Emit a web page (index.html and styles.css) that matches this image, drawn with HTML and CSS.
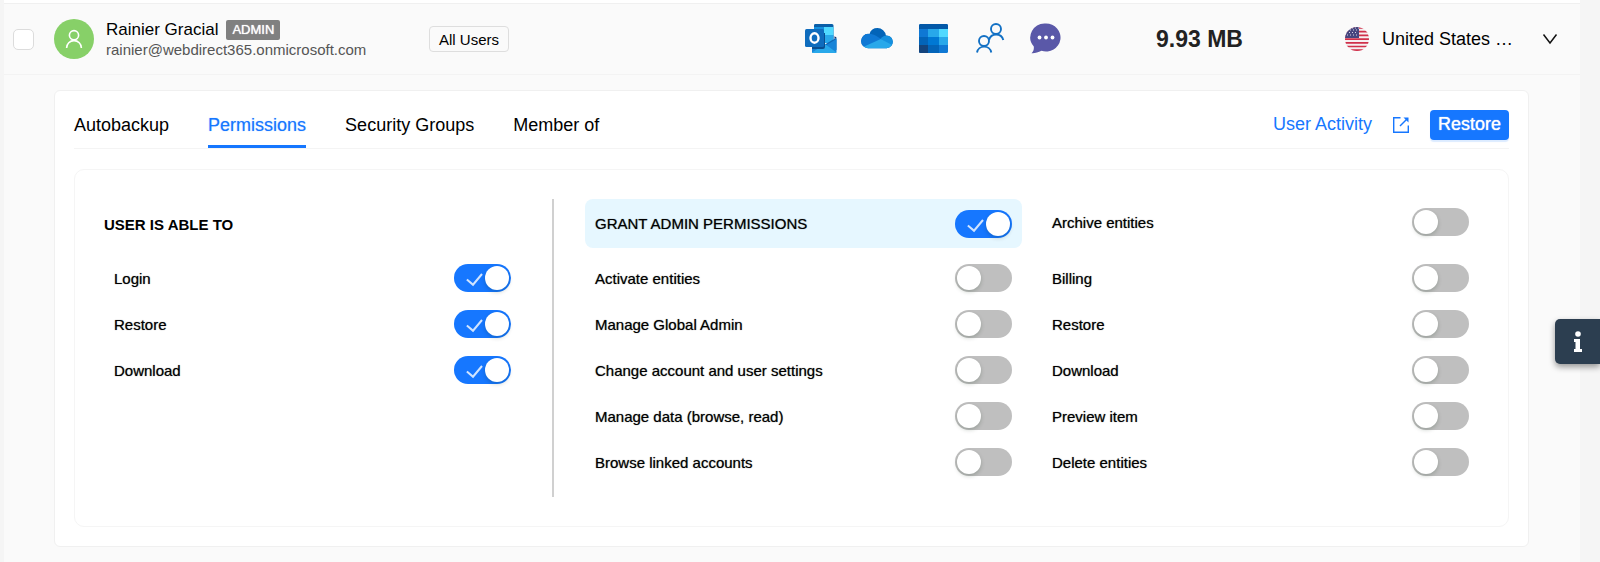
FILE: index.html
```html
<!DOCTYPE html>
<html lang="en">
<head>
    <meta charset="UTF-8" />
    <title>User permissions</title>
    <meta name="viewport" content="width=device-width, initial-scale=1.0" />
    <link rel="stylesheet" href="styles.css">
</head>
<body>

    <main class="page">
        <header class="user-row">
            <input type="checkbox" class="row-check" aria-label="Select Rainier Gracial" />

            <div class="user">
                <span class="avatar">
                    <svg width="20" height="20" viewBox="0 0 20 20" fill="none" stroke="#fff" stroke-width="1.6">
                        <circle cx="10" cy="6.2" r="4.6" />
                        <path d="M2.6 19a7.4 7.4 0 0 1 14.8 0" />
                    </svg>
                </span>
                <div class="user-text">
                    <div class="user-name">Rainier Gracial <span class="badge">ADMIN</span></div>
                    <div class="user-email">rainier@webdirect365.onmicrosoft.com</div>
                </div>
            </div>

            <div><button type="button" class="tag">All Users</button></div>

            <div class="services">
                <!-- Outlook -->
                <svg width="32" height="32" viewBox="0 0 32 32">
                    <path d="M10 1h17a1.5 1.5 0 0 1 1.5 1.5V16H9V2.5A1.5 1.5 0 0 1 10 1z" fill="#0a5fa8" />
                    <path d="M9 4h10v7H9z" fill="#1490df" />
                    <path d="M19 4h9.500v8H19z" fill="#50d9ff" />
                    <path d="M9 11h10v8H9z" fill="#0f78d4" />
                    <path d="M19 12h9.500v8H19z" fill="#28a8ea" />
                    <path d="M31.500 14.500L19 22l12.500 5z" fill="#1066b5" />
                    <path d="M31.500 14.500l-2-1.200v2.500z" fill="#0a2767" />
                    <path d="M7 18l12 5.500L31.500 16v13a1 1 0 0 1-1 1H8a1 1 0 0 1-1-1z" fill="#1784d8" />
                    <path d="M7 29.500L20 21l11.500 8.500-1 .5H8z" fill="#28a8ea" />
                    <path d="M7 10h13v14a2 2 0 0 1-2 2H7z" fill="#0a4f8f" />
                    <rect x="0" y="6" width="19" height="18" rx="1.500" fill="#0f6cbd" />
                    <ellipse cx="9.500" cy="15" rx="4" ry="4.700" fill="none" stroke="#fff" stroke-width="2.400" />
                </svg>
                <!-- OneDrive -->
                <svg width="32" height="32" viewBox="0 0 32 32">
                    <defs>
                        <clipPath id="cloud">
                            <circle cx="16.500" cy="13.500" r="8.500" />
                            <circle cx="7.300" cy="18" r="7.200" />
                            <circle cx="25.500" cy="18.800" r="6.300" />
                            <rect x="7" y="14" width="19" height="11.200" />
                        </clipPath>
                    </defs>
                    <g clip-path="url(#cloud)">
                        <rect width="32" height="32" fill="#0364b8" />
                        <path d="M0 8l8 3c3 0 5 .5 7 1.800l6 3.700L0 26z" fill="#0f78d4" />
                        <path d="M19.500 16c1.500-2 3.500-3.500 6-3.500H32V24z" fill="#1490df" />
                        <path d="M1 24.500L19.800 16 32 22.500V32H0z" fill="#28a8ea" />
                    </g>
                </svg>
                <!-- Calendar -->
                <svg width="32" height="32" viewBox="-1 0 32 32">
                    <rect x="1" y="1" width="29" height="29" rx="1.500" fill="#0f78d4" />
                    <path d="M1 6V2.500A1.500 1.500 0 0 1 2.500 1h26A1.500 1.500 0 0 1 30 2.500V6z" fill="#0358a7" />
                    <path d="M10 6h11v8H10z" fill="#28a8ea" />
                    <path d="M21 6h9v8h-9z" fill="#50d9ff" />
                    <path d="M10 14h11v8H10z" fill="#0078d4" />
                    <path d="M21 14h9v8h-9z" fill="#28a8ea" />
                    <path d="M1 14h9v8H1z" fill="#0364b8" />
                    <path d="M1 22h9v8H2.500A1.500 1.500 0 0 1 1 28.500z" fill="#14447d" />
                    <path d="M10 22h11v8H10z" fill="#0364b8" />
                </svg>
                <!-- Contacts -->
                <svg width="32" height="32" viewBox="-1 0 32 32" fill="none" stroke="#1270c4" stroke-width="1.900">
                    <circle cx="22" cy="6" r="5" />
                    <path d="M15 17a7.400 7.400 0 0 1 14.300 0" />
                    <circle cx="10" cy="18" r="5" fill="#fafafa" />
                    <path d="M3 29.500a7.300 7.300 0 0 1 14.300 0" />
                </svg>
                <!-- Chat -->
                <svg width="32" height="32" viewBox="-1 0 32 32">
                    <path d="M16 .5a14.500 14 0 1 1-4.500 27.300C8 29.500 4.500 30.500 1.500 30.200c2-2 2.600-4 2.300-6.700A14.500 14 0 0 1 16 .5z" fill="#5a58a8" />
                    <circle cx="9.500" cy="14.500" r="1.900" fill="#fff" />
                    <circle cx="16" cy="14.500" r="1.900" fill="#fff" />
                    <circle cx="22.500" cy="14.500" r="1.900" fill="#fff" />
                </svg>
            </div>

            <div class="size">9.93 MB</div>

            <div class="region">
                <svg width="24" height="24" viewBox="0 0 24 24">
                    <defs>
                        <clipPath id="round"><circle cx="12" cy="12" r="12" /></clipPath>
                    </defs>
                    <g clip-path="url(#round)">
                        <rect width="24" height="24" fill="#f6eff1" />
                        <path d="M0 1h24M0 4.700h24M0 8.400h24M0 12.100h24M0 15.800h24M0 19.500h24M0 23.200h24" stroke="#d0304a" stroke-width="1.700" />
                        <rect width="14" height="11" fill="#46467f" />
                        <path d="M2 3h12M1 5.500h12M2 8h12M7 1h7" stroke="#d5d5e4" stroke-width="1" stroke-dasharray="1 2" />
                    </g>
                </svg>
                <span class="region-name">United States …</span>
                <button type="button" class="expand" aria-label="Toggle details">
                    <svg width="16" height="12" viewBox="0 0 16 12" fill="none" stroke="#111" stroke-width="1.500">
                        <path d="M1.500 1.500L8 10l6.500-8.500" />
                    </svg>
                </button>
            </div>
        </header>

        <section class="card">
            <div class="card-head">
                <nav class="tabs">
                    <a href="#" class="tab">Autobackup</a>
                    <a href="#" class="tab active">Permissions</a>
                    <a href="#" class="tab">Security Groups</a>
                    <a href="#" class="tab">Member of</a>
                </nav>
                <div class="actions">
                    <a href="#" class="activity">
                        User Activity
                        <svg width="18" height="18" viewBox="0 0 18 18" fill="none" stroke="#1677ff" stroke-width="1.400">
                            <path d="M8.500 1.700H1.700v14.600h14.600V9.500" />
                            <path d="M8 10l7.500-7.500" />
                            <path d="M11.500 1.500h5v5z" fill="#1677ff" stroke="none" />
                        </svg>
                    </a>
                    <button type="button" class="restore">Restore</button>
                </div>
            </div>

            <div class="panel">
                <div class="abilities">
                    <h2>USER IS ABLE TO</h2>
                    <label class="perm">Login <input type="checkbox" class="switch" checked /></label>
                    <label class="perm">Restore <input type="checkbox" class="switch" checked /></label>
                    <label class="perm">Download <input type="checkbox" class="switch" checked /></label>
                </div>

                <div class="column">
                    <label class="perm grant">GRANT ADMIN PERMISSIONS <input type="checkbox" class="switch" checked /></label>
                    <label class="perm">Activate entities <input type="checkbox" class="switch" /></label>
                    <label class="perm">Manage Global Admin <input type="checkbox" class="switch" /></label>
                    <label class="perm">Change account and user settings <input type="checkbox" class="switch" /></label>
                    <label class="perm">Manage data (browse, read) <input type="checkbox" class="switch" /></label>
                    <label class="perm">Browse linked accounts <input type="checkbox" class="switch" /></label>
                </div>

                <div class="column">
                    <label class="perm first">Archive entities <input type="checkbox" class="switch" /></label>
                    <label class="perm">Billing <input type="checkbox" class="switch" /></label>
                    <label class="perm">Restore <input type="checkbox" class="switch" /></label>
                    <label class="perm">Download <input type="checkbox" class="switch" /></label>
                    <label class="perm">Preview item <input type="checkbox" class="switch" /></label>
                    <label class="perm">Delete entities <input type="checkbox" class="switch" /></label>
                </div>
            </div>
        </section>
    </main>

    <button type="button" class="info" aria-label="Information">
        <svg width="10" height="22" viewBox="0 0 10 22" fill="#fff">
            <circle cx="5" cy="3" r="2.800" />
            <path d="M1 8h6v10h2v3H1v-3h1.500v-7H1z" />
        </svg>
    </button>

</body>
</html>
```

FILE: styles.css
```css
:root {
    --blue: #1677ff;
    --line: #f0f0f0;
    --page: #fafafa;
    --text: #000;
}

* {
    box-sizing: border-box;
    margin: 0;
    padding: 0;
}

body {
    font-family: "Liberation Sans", Arial, sans-serif;
    font-size: 15px;
    color: var(--text);
    background: #f5f5f5;
    min-height: 100vh;
    display: flex;
    padding: 0 20px 0 4px;
}

button {
    font-family: inherit;
    cursor: pointer;
}

a {
    color: inherit;
    text-decoration: none;
}

svg {
    display: block;
    flex: none;
}

.page {
    flex: 1;
    min-width: 0;
    background: var(--page);
    border-top: 3px solid #fff;
}

/* User row */
.user-row {
    display: grid;
    grid-template-columns: 41px 375px 1fr 351px 189px 213px;
    align-items: center;
    height: 72px;
    padding: 0 22px 0 9px;
    border-top: 1px solid var(--line);
    border-bottom: 1px solid #f3f3f3;
}

.row-check {
    appearance: none;
    width: 21px;
    height: 21px;
    background: #fff;
    border: 1px solid #dcdcdc;
    border-radius: 5px;
}

.user {
    display: flex;
    align-items: center;
    gap: 12px;
}

.user-text {
    padding-top: 2px;
}

.avatar {
    display: flex;
    align-items: center;
    justify-content: center;
    width: 40px;
    height: 40px;
    border-radius: 50%;
    background: #87d068;
}

.user-name {
    display: flex;
    align-items: center;
    gap: 8px;
    font-size: 17px;
    line-height: 20px;
}

.badge {
    padding: 0 6px;
    font-size: 13px;
    color: #fff;
    text-shadow: 0 0 1px #fff;
    background: #808080;
    border-radius: 2px;
}

.user-email {
    font-size: 15px;
    line-height: 20px;
    color: #555;
}

.tag {
    height: 26px;
    padding: 0 9px;
    font-size: 15px;
    color: var(--text);
    background: var(--page);
    border: 1px solid #dedede;
    border-radius: 4px;
}

.services {
    display: flex;
    gap: 24px;
}

.size {
    font-size: 23px;
    font-weight: bold;
    color: #222;
}

.region {
    display: flex;
    align-items: center;
    font-size: 18px;
}

.region-name {
    margin-left: 13px;
    white-space: nowrap;
}

.expand {
    margin-left: auto;
    background: none;
    border: none;
}

/* Details card */
.card {
    margin: 15px 51px 16px 50px;
    padding: 0 19px 19px;
    background: #fff;
    border: 1px solid var(--line);
    border-radius: 6px;
}

.card-head {
    display: flex;
    align-items: center;
    justify-content: space-between;
    border-bottom: 1px solid #f4f4f4;
    margin-bottom: 20px;
    font-size: 18px;
}

.tabs {
    display: flex;
    gap: 39px;
}

.tab {
    padding: 12px 0 9px;
    line-height: 44px;
    height: 57px;
    border-bottom: 3px solid transparent;
}

.tab.active {
    color: var(--blue);
    border-bottom-color: var(--blue);
    text-shadow: 0 0 1px rgba(22, 119, 255, 0.5);
}

.actions {
    display: flex;
    align-items: center;
    gap: 20px;
    padding-top: 10px;
}

.activity {
    display: flex;
    align-items: center;
    gap: 20px;
    color: var(--blue);
}

.restore {
    height: 30px;
    padding: 0 8px;
    font-size: 18px;
    color: #fff;
    text-shadow: 0 0 1px #fff;
    background: var(--blue);
    border: none;
    border-radius: 4px;
    box-shadow: 0 2px 1px rgba(22, 119, 255, 0.15);
}

.panel {
    display: flex;
    gap: 20px;
    min-height: 358px;
    padding: 29px;
    border: 1px solid #f5f5f5;
    border-radius: 10px;
}

.abilities {
    flex: 0 0 450px;
    margin-right: 11px;
    padding-right: 31px;
    border-right: 2px solid #d0d0d0;
}

.abilities h2 {
    height: 56px;
    font-size: 15px;
    line-height: 52px;
}

.column {
    flex: 1;
}

.perm {
    display: flex;
    align-items: center;
    justify-content: space-between;
    height: 46px;
    padding: 0 10px;
    text-shadow: 0 0 1px rgba(0, 0, 0, 0.6);
    cursor: pointer;
}

.perm.grant {
    height: 49px;
    margin-bottom: 7px;
    background: #e6f7ff;
    border-radius: 8px;
}

.perm.first {
    margin-bottom: 10px;
}

/* Switch */
.switch {
    appearance: none;
    position: relative;
    width: 57px;
    height: 28px;
    border-radius: 14px;
    background: #bfbfbf;
    cursor: pointer;
}

.switch::before {
    content: "";
    position: absolute;
    top: 2px;
    left: 2px;
    width: 24px;
    height: 24px;
    border-radius: 50%;
    background: #fff;
    box-shadow: 0 2px 4px rgba(0, 35, 11, 0.2);
}

.switch:checked {
    background: var(--blue);
}

.switch:checked::before {
    left: 31px;
}

.switch:checked::after {
    content: "";
    position: absolute;
    top: 6px;
    left: 16px;
    width: 7px;
    height: 13px;
    border: solid rgba(255, 255, 255, 0.8);
    border-width: 0 2px 2px 0;
    transform: rotate(40deg);
}

/* Floating info button */
.info {
    position: fixed;
    top: 319px;
    right: 0;
    display: flex;
    align-items: center;
    justify-content: center;
    width: 45px;
    height: 45px;
    background: #2c3e50;
    border: none;
    border-radius: 5px 0 0 5px;
    box-shadow: 0 3px 6px rgba(0, 0, 0, 0.4);
}
```
